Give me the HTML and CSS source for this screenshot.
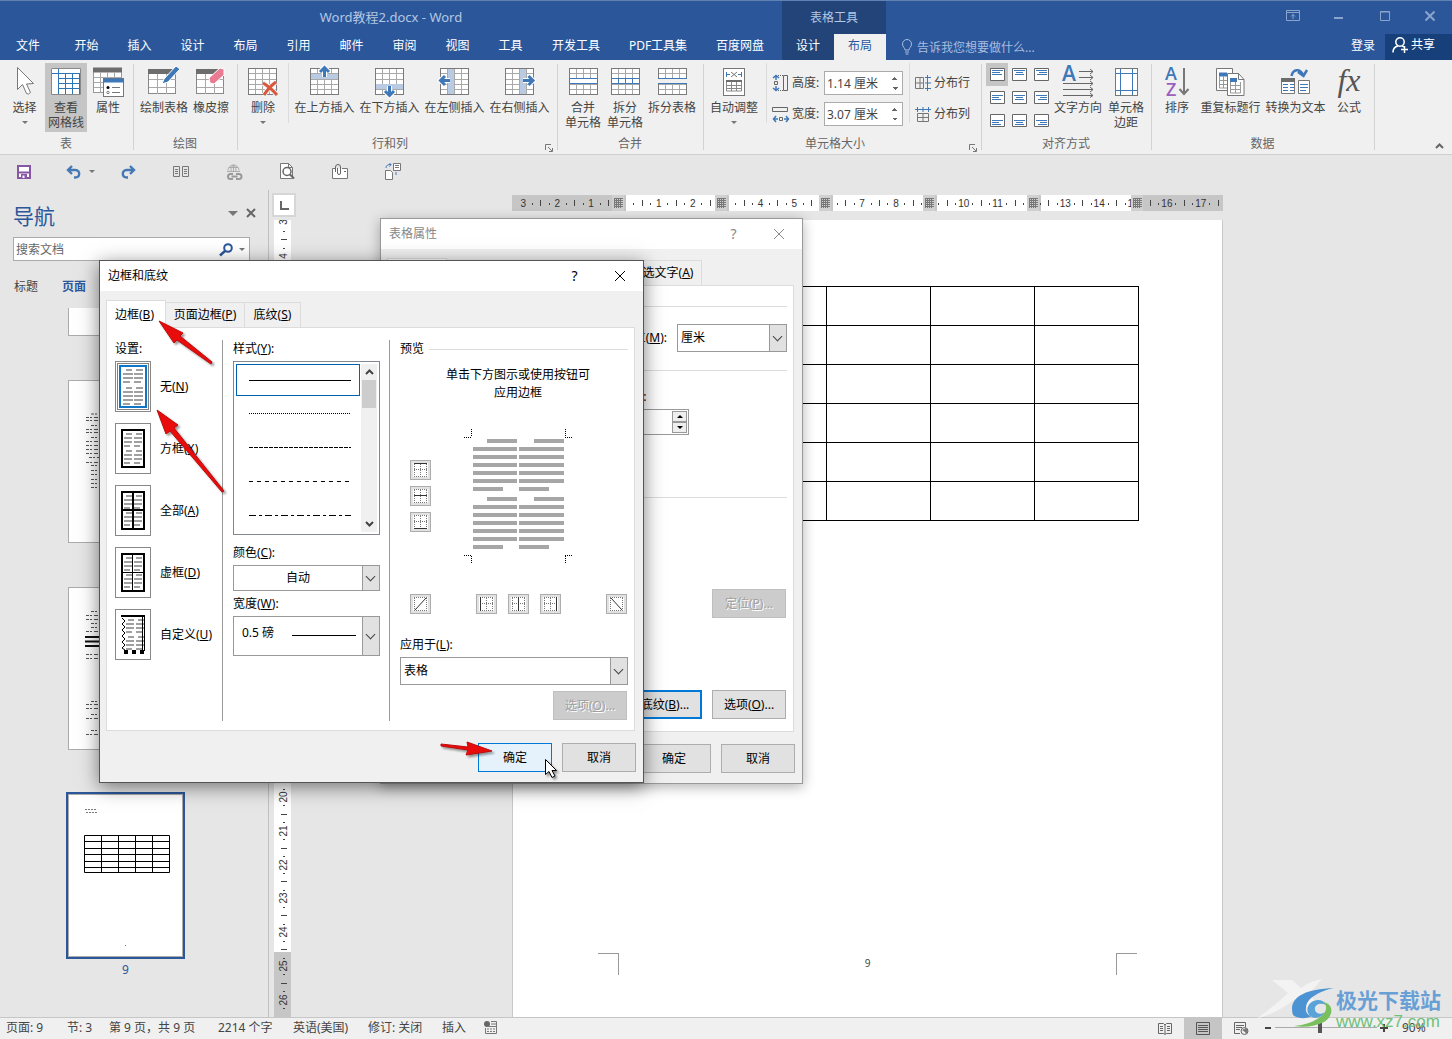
FILE: index.html
```html
<!DOCTYPE html>
<html lang="zh-CN">
<head>
<meta charset="utf-8">
<title>Word教程2.docx - Word</title>
<link rel="stylesheet" href="styles.css">
</head>
<body>
<svg class="sprite" aria-hidden="true">
  <symbol id="grid" viewBox="0 0 29 27">
    <rect x=".5" y=".5" width="28" height="26" fill="#fff" stroke="#7a7a7a"/>
    <path d="M7.500 1v25M14.500 1v25M21.500 1v25M1 5.500h27M1 11.500h27M1 16.500h27M1 21.500h27" stroke="#a9a9a9" fill="none"/>
  </symbol>
  <symbol id="lines" viewBox="0 0 34 49">
    <path d="M10 10h6M20 10h6M8 14h8M18 14h8M8 18h8M18 18h8M8 22h6M18 22h6M10 27h6M20 27h6M8 31h8M18 31h8M8 35h8M18 35h8M8 39h6M18 39h6" stroke="#a0a0a0" stroke-width="2" fill="none"/>
  </symbol>
  <symbol id="dots" viewBox="0 0 15 14">
    <rect width="15" height="14" fill="#fff"/>
    <path d="M1 .5h13M1 6.500h13M1 13.500h13M1.500 1v13M7.500 1v13M13.500 1v13" stroke="#777" stroke-dasharray="1 1" fill="none"/>
  </symbol>
  <symbol id="dots-frame" viewBox="0 0 15 14">
    <rect width="15" height="14" fill="#fff"/>
    <path d="M1 .5h13M1 13.500h13M1.500 1v13M13.500 1v13" stroke="#777" stroke-dasharray="1 1" fill="none"/>
  </symbol>
  <symbol id="launch" viewBox="0 0 9 9"><path d="M.5 6V.5H6M3 3l4 4M7.500 4v3.500H4" stroke="#777" fill="none"/></symbol>
  <symbol id="close" viewBox="0 0 12 12"><path d="M1 1l10 10M11 1L1 11" stroke="currentColor" fill="none"/></symbol>
</svg>

<header class="titlebar">
  <div class="title-left">
    <div class="doc-title">Word教程2.docx - Word</div>
    <nav class="tabs">
      <button class="tab file">文件</button>
      <button class="tab">开始</button>
      <button class="tab">插入</button>
      <button class="tab">设计</button>
      <button class="tab">布局</button>
      <button class="tab">引用</button>
      <button class="tab">邮件</button>
      <button class="tab">审阅</button>
      <button class="tab">视图</button>
      <button class="tab">工具</button>
      <button class="tab wide">开发工具</button>
      <button class="tab wider">PDF工具集</button>
      <button class="tab wide">百度网盘</button>
    </nav>
  </div>
  <div class="context">
    <div class="context-title">表格工具</div>
    <div class="context-tabs">
      <button class="tab">设计</button>
      <button class="tab active">布局</button>
    </div>
  </div>
  <div class="title-right">
    <div class="window-buttons">
      <button aria-label="功能区显示选项"><svg width="14" height="12"><path d="M.5 .5h13v10h-13zM.5 2.500h13M7 9V4M5 6.500l2-2 2 2" stroke="#8ba4cd" fill="none"/></svg></button>
      <button aria-label="最小化"><svg width="12" height="12"><path d="M1 8h9" stroke="#8ba4cd" stroke-width="2"/></svg></button>
      <button aria-label="最大化"><svg width="12" height="12"><path d="M1.500 1.500h9v9h-9zM1 2h10" stroke="#8ba4cd" fill="none"/></svg></button>
      <button aria-label="关闭"><svg width="12" height="12"><path d="M1.500 1.500l9 9M10.500 1.500l-9 9" stroke="#8ba4cd" stroke-width="2"/></svg></button>
    </div>
    <div class="tell-row">
      <svg width="12" height="16" class="bulb"><path d="M4 11c0-2-2.500-3-2.500-6a4.500 4.500 0 0 1 9 0c0 3-2.500 4-2.500 6zM4 13h4M4.500 15h3" stroke="#a8bde0" fill="none"/></svg>
      <input class="tell" aria-label="操作说明搜索" placeholder="告诉我您想要做什么...">
      <button class="login">登录</button>
      <button class="share"><svg width="16" height="16"><circle cx="8" cy="5" r="4.200" fill="none" stroke="#fff" stroke-width="1.500"/><path d="M1 15.500c0-4 2.500-6 5-6.500M10 9c1 .3 2 1 2 1M9 12.500h7M12.500 9v7" stroke="#fff" stroke-width="1.500" fill="none"/></svg>共享</button>
    </div>
  </div>
</header>

<section class="ribbon">
  <div class="group g-table">
    <div class="items">
      <button class="big w40"><svg width="30" height="30"><path d="M7.500 .5v22l5-5 4 9q2 1.500 4-1l-4-8.500 7-.5z" fill="#fff" stroke="#777"/></svg><span>选择</span><i class="caret"></i></button>
      <button class="big w42 pressed"><svg width="30" height="30"><path d="M.5 1.500h29v26h-29z" fill="#fff"/><path d="M1 1.500h28.500v26H.5v-26" fill="none" stroke="#888"/><path d="M7.500 2v25M1 6.500h28M8 11.500h21M8 16.500h21M8 21.500h21M14.500 6v21M21.500 6v21M28.500 6v21" stroke="#2e75b6" fill="none"/></svg><span>查看</span><span>网格线</span></button>
      <button class="big w42"><svg width="31" height="30"><rect x=".5" y="1.500" width="28" height="24" fill="#fff" stroke="#999"/><path d="M0 3h29" stroke="#6d6d6d" stroke-width="5"/><path d="M1 10.500h27M1 15.500h27M1 20.500h27M7.500 5v20M14.500 5v20M21.500 5v20" stroke="#a9a9a9"/><rect x="10.500" y="11.500" width="20" height="18" fill="#fff" stroke="#777"/><path d="M10 13.500h21" stroke="#3f78b8" stroke-width="4"/><path d="M19 20.500h8M19 25.500h8" stroke="#777"/><circle cx="15" cy="20.500" r="1.500"/><circle cx="15" cy="25.500" r="1.200" fill="none" stroke="#777"/></svg><span>属性</span></button>
    </div>
    <div class="foot"><span>表</span></div>
  </div>
  <div class="group g-draw">
    <div class="items">
      <button class="big w54"><svg width="33" height="30"><rect x=".5" y="2.500" width="27" height="24" fill="#fff" stroke="#888"/><path d="M0 4.500h28" stroke="#6d6d6d" stroke-width="5"/><path d="M9.500 7v20M18.500 7v20M1 12.500h27M1 20.500h27" stroke="#a9a9a9"/><path d="M14 17l2-5L28-1l4 3-12 13z" fill="#3f78b8" stroke="#fff"/></svg><span>绘制表格</span></button>
      <button class="big w42"><svg width="30" height="30"><rect x=".5" y="2.500" width="27" height="24" fill="#fff" stroke="#888"/><path d="M0 4.500h28" stroke="#6d6d6d" stroke-width="5"/><path d="M9.500 7v20M18.500 7v20M1 12.500h27M1 20.500h27" stroke="#a9a9a9"/><path d="M13 11L24 1l4 1v6L18 17l-4-1z" fill="#ea7b92" stroke="#fff"/></svg><span>橡皮擦</span></button>
    </div>
    <div class="foot"><span>绘图</span></div>
  </div>
  <div class="group g-rows">
    <div class="items">
      <button class="big w50"><svg width="31" height="30"><use href="#grid" y="1" width="29" height="27"/><path d="M15 16q7 4 14 12M28 15Q21 20 16 28" stroke="#f0f0f0" stroke-width="5" fill="none"/><path d="M15 16q7 4 14 12M28 15Q21 20 16 28" stroke="#d9583b" stroke-width="3" fill="none"/></svg><span>删除</span><i class="caret"></i></button>
      <i class="sep"></i>
      <button class="big w65"><svg width="29" height="30"><use href="#grid" y="1" width="29" height="27"/><path d="M1 7h27v5H1z" fill="#b9cbe2"/><path d="M14.500 10V2M10 5l4.500-4.500L19 5" stroke="#fff" stroke-width="5" fill="none"/><path d="M14.500 10V2M10 5l4.500-4.500L19 5" stroke="#3f78b8" stroke-width="3" fill="none"/></svg><span>在上方插入</span></button>
      <button class="big w65"><svg width="29" height="30"><use href="#grid" y="1" width="29" height="27"/><path d="M1 17h27v5H1z" fill="#b9cbe2"/><path d="M14.500 19v9M10 24l4.500 4.500L19 24" stroke="#fff" stroke-width="5" fill="none"/><path d="M14.500 19v9M10 24l4.500 4.500L19 24" stroke="#3f78b8" stroke-width="3" fill="none"/></svg><span>在下方插入</span></button>
      <button class="big w65"><svg width="31" height="30"><use href="#grid" x="1" y="1" width="29" height="27"/><path d="M9 2h6v25H9z" fill="#b9cbe2"/><path d="M11 13.500H2M6 9l-4.500 4.500L6 18" stroke="#fff" stroke-width="5" fill="none"/><path d="M11 13.500H2M6 9l-4.500 4.500L6 18" stroke="#3f78b8" stroke-width="3" fill="none"/></svg><span>在左侧插入</span></button>
      <button class="big w65"><svg width="31" height="30"><use href="#grid" x="1" y="1" width="29" height="27"/><path d="M16 2h6v25h-6z" fill="#b9cbe2"/><path d="M19 13.500h9M24.500 9l4.500 4.500-4.500 4.500" stroke="#fff" stroke-width="5" fill="none"/><path d="M19 13.500h9M24.500 9l4.500 4.500-4.500 4.500" stroke="#3f78b8" stroke-width="3" fill="none"/></svg><span>在右侧插入</span></button>
    </div>
    <div class="foot has-launch"><span>行和列</span><button class="launch" aria-label="表格属性"><svg width="9" height="9"><use href="#launch"/></svg></button></div>
  </div>
  <div class="group g-merge">
    <div class="items">
      <button class="big w42"><svg width="29" height="30"><use href="#grid" y="1" width="29" height="27"/><path d="M.5 11.500h28v5H.5z" fill="#fff" stroke="#3f78b8"/></svg><span>合并</span><span>单元格</span></button>
      <button class="big w42"><svg width="29" height="30"><use href="#grid" y="1" width="29" height="27"/><path d="M.5 11.500h28v5H.5zM7.500 11v6M14.500 11v6M21.500 11v6" fill="#fff" stroke="#3f78b8"/></svg><span>拆分</span><span>单元格</span></button>
      <button class="big w54"><svg width="29" height="30"><use href="#grid" y="1" width="29" height="27"/><path d="M0 12h29v4H0z" fill="#f0f0f0"/><path d="M0 11.500h29M0 16.500h29" stroke="#3f78b8"/></svg><span>拆分表格</span></button>
    </div>
    <div class="foot"><span>合并</span></div>
  </div>
  <div class="group g-size">
    <div class="items">
      <button class="big w60"><svg width="22" height="30"><rect x=".5" y="1.500" width="21" height="27" fill="#fff" stroke="#777"/><path d="M3 14h16" stroke="#6d6d6d" stroke-width="2"/><path d="M3.500 15v9h15v-9M3 18.500h16M3 21.500h16M8.500 15v9M13.500 15v9" stroke="#888" fill="none"/><path d="M3.500 5v5M18.500 5v5M4 7.500h3M15 7.500h3" stroke="#3f78b8"/><path d="M8 5l6 5M14 5l-6 5" stroke="#777"/></svg><span>自动调整</span><i class="caret"></i></button>
      <i class="sep"></i>
      <div class="dims">
        <div class="dim"><svg width="17" height="18"><path d="M6 1.500h5M6 16.500h5" stroke="#666" stroke-dasharray="1 1"/><path d="M11.500 1.500h4v15h-4zM2.500 7.500h3v3h-3z" stroke="#666" fill="none"/><path d="M4 1v5M4 12v5M1 4l3-2.500L7 4M1 14l3 2.500L7 14" stroke="#3f78b8" stroke-width="1.500" fill="none"/></svg><label for="cell-h">高度:</label><div class="spin"><input id="cell-h" value="1.14 厘米"><i class="updown"></i></div></div>
        <div class="dim"><svg width="17" height="18"><path d="M.5 2.500h15v4H.5zM7.500 12.500h3v3h-3z" stroke="#666" fill="none"/><path d="M1 14h5M12 14h5M4 11l-2.500 3L4 17M14 11l2.500 3-2.500 3" stroke="#3f78b8" stroke-width="1.500" fill="none"/></svg><label for="cell-w">宽度:</label><div class="spin"><input id="cell-w" value="3.07 厘米"><i class="updown"></i></div></div>
      </div>
      <i class="sep"></i>
      <div class="dist">
        <button><svg width="16" height="16"><path d="M.5 2.500h8v11h-8zM.5 8h8M5 2.500v11" stroke="#777" fill="none"/><path d="M12.500 0v16M10 2.500h6M10 8h6M10 13.500h6" stroke="#3f78b8"/></svg>分布行</button>
        <button><svg width="16" height="16"><path d="M2.500 7.500h11v8h-11zM2.500 11.500h11M8 7.500v8" stroke="#777" fill="none"/><path d="M0 3.500h16M2.500 1v5M8 1v5M13.500 1v5" stroke="#3f78b8"/></svg>分布列</button>
      </div>
    </div>
    <div class="foot has-launch"><span>单元格大小</span><button class="launch" aria-label="单元格大小设置"><svg width="9" height="9"><use href="#launch"/></svg></button></div>
  </div>
  <div class="group g-align">
    <div class="items">
      <div class="align-grid">
        <button class="pressed" aria-label="靠上左对齐"><svg width="15" height="13"><path d="M.5 .5h14v12H.5z" fill="#fff" stroke="#666"/><path d="M2 2.500h11M2 4.500h8M2 6.500h10" stroke="#3f78b8"/></svg></button>
        <button aria-label="靠上居中"><svg width="15" height="13"><path d="M.5 .5h14v12H.5z" fill="#fff" stroke="#666"/><path d="M2 2.500h11M4 4.500h7M3 6.500h9" stroke="#3f78b8"/></svg></button>
        <button aria-label="靠上右对齐"><svg width="15" height="13"><path d="M.5 .5h14v12H.5z" fill="#fff" stroke="#666"/><path d="M2 2.500h11M5 4.500h8M3 6.500h10" stroke="#3f78b8"/></svg></button>
        <button aria-label="中部左对齐"><svg width="15" height="13"><path d="M.5 .5h14v12H.5z" fill="#fff" stroke="#666"/><path d="M2 4.500h11M2 6.500h7M2 8.500h9" stroke="#3f78b8"/></svg></button>
        <button aria-label="水平居中"><svg width="15" height="13"><path d="M.5 .5h14v12H.5z" fill="#fff" stroke="#666"/><path d="M2 4.500h11M4 6.500h7M3 8.500h9" stroke="#3f78b8"/></svg></button>
        <button aria-label="中部右对齐"><svg width="15" height="13"><path d="M.5 .5h14v12H.5z" fill="#fff" stroke="#666"/><path d="M2 4.500h11M6 6.500h7M4 8.500h9" stroke="#3f78b8"/></svg></button>
        <button aria-label="靠下左对齐"><svg width="15" height="13"><path d="M.5 .5h14v12H.5z" fill="#fff" stroke="#666"/><path d="M2 6.500h11M2 8.500h7M2 10.500h9" stroke="#3f78b8"/></svg></button>
        <button aria-label="靠下居中"><svg width="15" height="13"><path d="M.5 .5h14v12H.5z" fill="#fff" stroke="#666"/><path d="M2 6.500h11M4 8.500h7M3 10.500h9" stroke="#3f78b8"/></svg></button>
        <button aria-label="靠下右对齐"><svg width="15" height="13"><path d="M.5 .5h14v12H.5z" fill="#fff" stroke="#666"/><path d="M2 6.500h11M6 8.500h7M4 10.500h9" stroke="#3f78b8"/></svg></button>
      </div>
      <button class="big w50"><svg width="32" height="30"><text class="letter" x="0" y="14" font-size="21" fill="#3f78b8">A</text><path d="M17 4.500h14M17 10.500h14M1 16.500h30M1 22.500h30M1 28.500h30M28 2l3 2.500L28 7M28 8l3 2.500-3 2.500M28 14l3 2.500-3 2.500M28 20l3 2.500-3 2.500M28 26l3 2.500-3 2" stroke="#666" fill="none"/></svg><span>文字方向</span></button>
      <button class="big w46"><svg width="23" height="30"><rect x=".5" y="1.500" width="22" height="27" fill="#fff" stroke="#777"/><path d="M5.500 2v26M17.500 2v26M1 6.500h21M1 23.500h21" stroke="#3f78b8"/></svg><span>单元格</span><span>边距</span></button>
    </div>
    <div class="foot"><span>对齐方式</span></div>
  </div>
  <div class="group g-data">
    <div class="items">
      <button class="big w42"><svg width="26" height="30"><text class="letter" x="1" y="13" font-size="18" fill="#3f78b8">A</text><text class="letter" x="2" y="29" font-size="18" fill="#9b5fc0">Z</text><path d="M20 1v26M15.500 22l4.500 5 4.500-5" stroke="#777" stroke-width="2" fill="none"/></svg><span>排序</span></button>
      <button class="big w65"><svg width="29" height="30"><path d="M.5 1.500h16v22H.5z" fill="#fff" stroke="#777"/><path d="M3 7.500h8" stroke="#3f78b8" stroke-width="4"/><path d="M3.500 9v12h8M3 13.500h9M3 17.500h9M7.500 9v12" stroke="#999" fill="none"/><path d="M11.500 6.500h11l5.500 6v16H11.500z" fill="#fff" stroke="#777"/><path d="M22.500 6.500v6H28" stroke="#777" fill="none"/><path d="M14 13h7" stroke="#3f78b8" stroke-width="4"/><path d="M14.500 15v11h10V15M14 18.500h11M14 22.500h11M19.500 15v11" stroke="#999" fill="none"/></svg><span>重复标题行</span></button>
      <button class="big w65"><svg width="29" height="30"><path d="M.5 11.500h13v15H.5zM17.500 13.500h11v13h-11z" fill="#fff" stroke="#777"/><path d="M0 13h14" stroke="#6d6d6d" stroke-width="4"/><path d="M2 17.500h5M2 20.500h5M2 23.500h5M9 17.500h4M9 20.500h4M9 23.500h4M19 17.500h8M19 20.500h8M19 23.500h6" stroke="#3f78b8"/><path d="M10.500 9C12 2 19 1 22 8M17 5l5.500 4L26 3" stroke="#3f78b8" stroke-width="2.500" fill="none"/></svg><span>转换为文本</span></button>
      <button class="big w42"><em class="fx">fx</em><span>公式</span></button>
    </div>
    <div class="foot"><span>数据</span></div>
  </div>
  <button class="collapse" aria-label="折叠功能区"><svg width="9" height="6"><path d="M1 5l3.500-3.500L8 5" stroke="#666" stroke-width="2" fill="none"/></svg></button>
</section>

<section class="quick">
  <button class="save" aria-label="保存"><svg width="14" height="14"><path d="M1 1h12v12H1zM1 7.500h12" stroke="#8757a5" stroke-width="2" fill="#fff"/><path d="M4 9h6v4H4z" fill="#8757a5"/><path d="M5.500 10.500h2V13h-2z" fill="#fff"/></svg></button>
  <button aria-label="撤消"><svg width="16" height="14"><path d="M2 5h7.500c5 0 5 7.500-.5 7.500H8M6 1L2 5l4 4" stroke="#4478b4" stroke-width="2.400" fill="none"/></svg></button>
  <button class="more" aria-label="撤消列表"><i class="caret"></i></button>
  <button aria-label="恢复"><svg width="16" height="14"><path d="M14 5H6.500c-5 0-5 7.500.5 7.500H8M10 1l4 4-4 4" stroke="#4478b4" stroke-width="2.400" fill="none"/></svg></button>
  <button aria-label="并排"><svg width="16" height="12"><path d="M.5 .5h6v10h-6zM9.500 .5h6v10h-6zM2 3.500h3M2 5.500h3M2 7.500h3M11 3.500h3M11 5.500h3M11 7.500h3" stroke="#777" fill="none"/></svg></button>
  <button aria-label="链接"><svg width="16" height="18"><path d="M2 7.500a5.500 5.500 0 0 1 11 0M1 8.500h13M3 4.500h9M7.500 2v7M5 8c0-4 1-5 2.500-6C9 3 10 4 10 8" stroke="#aaa" fill="none"/><path d="M7 11H4.500a2.500 2.500 0 0 0 0 5H7M10 11h3a2.500 2.500 0 0 1 0 5h-3M5.500 13.500h6" stroke="#999" stroke-width="2" fill="none"/></svg></button>
  <button aria-label="打印预览"><svg width="14" height="17"><path d="M.5 .5h8l4 4v11H.5z" fill="#fff" stroke="#777"/><path d="M8.500 .5v4h4" stroke="#777" fill="none"/><circle cx="7" cy="8.500" r="4" fill="#fff" stroke="#666" stroke-width="1.500"/><path d="M10 11.500l4 4" stroke="#666" stroke-width="2"/></svg></button>
  <button aria-label="附件"><svg width="16" height="16"><path d="M3 4.500H.5v10h15v-10H10" fill="#fff" stroke="#777"/><path d="M12 7.500h2M3.500 8V3a2.500 2.500 0 0 1 5 0v6a1.500 1.500 0 0 1-3 0V4" stroke="#666" fill="none"/></svg></button>
  <button aria-label="比较文档"><svg width="16" height="17"><path d="M.5 7.500h5l2 2v7h-7zM8.500 .5h7v7h-7zM10 2.500h4M10 4.500h4" fill="#fff" stroke="#777"/><path d="M1 5c0-3 2-3.500 5-3.500M4.500 0L6 1.500 4.500 3.500M11 9v3" stroke="#3f78b8" fill="none"/></svg></button>
</section>

<main class="workspace">
  <aside class="nav">
    <div class="nav-head"><h2>导航</h2><button aria-label="任务窗格选项"><i class="caret big-caret"></i></button><button aria-label="关闭导航"><svg width="10" height="10"><path d="M1 1l8 8M9 1L1 9" stroke="#666" stroke-width="2"/></svg></button></div>
    <div class="search"><input aria-label="搜索文档" placeholder="搜索文档"><svg width="14" height="13"><circle cx="9" cy="5" r="3.800" fill="none" stroke="#2b579a" stroke-width="2"/><path d="M6 8l-5 4.500" stroke="#2b579a" stroke-width="2.500"/></svg><i class="caret"></i></div>
    <div class="nav-tabs"><button>标题</button><button class="on">页面</button></div>
    <div class="thumbs">
      <div class="thumb cut"><span class="sheet"></span><span class="no"></span></div>
      <div class="thumb"><span class="sheet"><svg width="115" height="161"><path d="M22 33h77M17 36.500h81M17 39.500h81M22 44.500h77M17 48.500h81M17 51.500h81M22 56.500h77M17 60.500h81M17 64.500h81M17 68.500h60M17 72.500h81M20 76.500h70M17 81.500h81M22 84.500h60M22 89.500h77M22 93.500h77M22 98.500h60M22 102.500h60M22 106.500h60" stroke="#555" stroke-dasharray="3 1 2 2 4 1"/></svg></span><span class="no"></span></div>
      <div class="thumb"><span class="sheet"><svg width="115" height="161"><path d="M22 23.500h77M17 27.500h81M17 31.500h81M22 35.500h77M22 39.500h77M17 43.500h81M17 66.500h81M17 70.500h81M22 113.500h77M17 116.500h81M17 120.500h81M22 126.500h77M17 130.500h81M22 142.500h77M17 146.500h81" stroke="#555" stroke-dasharray="3 1 2 2 4 1"/><path d="M16 49h82M16 53.500h82M16 58h82" stroke="#111" stroke-width="2"/></svg></span><span class="no"></span></div>
      <div class="thumb current"><span class="sheet"><svg width="115" height="161"><path d="M16 14.500h12M17 17.500h12" stroke="#777" stroke-dasharray="2 1"/><path d="M15.500 40.500h85v37h-85zM15 46.500h86M15 53.500h86M15 59.500h86M15 66.500h86M15 72.500h86M32.500 40v38M49.500 40v38M66.500 40v38M83.500 40v38" stroke="#000" fill="none"/><path d="M56 150.500h1" stroke="#777"/></svg></span><span class="no">9</span></div>
    </div>
  </aside>
  <div class="vruler-col">
    <button class="corner" aria-label="制表符"><svg width="9" height="9"><path d="M1 0v8h8" stroke="#666" stroke-width="2" fill="none"/></svg></button>
    <div class="vruler"><svg id="vruler" width="17" height="1600"></svg></div>
  </div>
  <div class="canvas">
    <div class="hruler"><svg id="hruler" width="711" height="16"></svg></div>
    <article class="page">
      <table class="doc-table" aria-label="文档表格">
        <tr><td></td><td></td><td></td><td></td><td></td></tr>
        <tr><td></td><td></td><td></td><td></td><td></td></tr>
        <tr><td></td><td></td><td></td><td></td><td></td></tr>
        <tr><td></td><td></td><td></td><td></td><td></td></tr>
        <tr><td></td><td></td><td></td><td></td><td></td></tr>
        <tr><td></td><td></td><td></td><td></td><td></td></tr>
      </table>
      <div class="page-foot"><i class="mark left"></i><span>9</span><i class="mark right"></i></div>
    </article>
  </div>
</main>

<footer class="status">
  <span class="s1">页面: 9</span><span class="s2">节: 3</span><span class="s3">第 9 页，共 9 页</span><span class="s4">2214 个字</span><span class="s5">英语(美国)</span><span class="s6">修订: 关闭</span><span class="s7">插入</span>
  <svg width="13" height="13"><circle cx="3" cy="3" r="3" fill="#666"/><path d="M7 .5h5.500v12h-11V7M2 5.500h10M7 3h5" stroke="#777" fill="none"/><path d="M3 8h9M3 10.500h9" stroke="#777" stroke-dasharray="2 1"/></svg>
  <div class="views">
    <button aria-label="阅读视图"><svg width="14" height="13"><path d="M.5 1.500h5L7 3l1.500-1.500h5v10h-5L7 12.500 5.500 11.500h-5zM7 3v9M2 4.500h3M2 6.500h3M2 8.500h3M9 4.500h3M9 6.500h3M9 8.500h3" stroke="#666" fill="none"/></svg></button>
    <button class="pressed" aria-label="页面视图"><svg width="14" height="13"><path d="M.5 .5h13v12H.5zM2 3.500h10M2 5.500h10M2 7.500h10M2 9.500h10" stroke="#555" fill="none"/></svg></button>
    <button aria-label="Web 版式视图"><svg width="15" height="13"><path d="M6 11.500H.5V.5h11V5M2 3.500h8M2 5.500h6M2 7.500h4" stroke="#666" fill="none"/><circle cx="10.500" cy="9" r="3.500" fill="#eee" stroke="#666"/><path d="M8 8l3 2 1 2 2-3-2-3z" fill="#777"/></svg></button>
  </div>
  <div class="zoom"><button aria-label="缩小"><svg width="8" height="8"><path d="M1 4h6" stroke="#444" stroke-width="2"/></svg></button><input type="range" min="0" max="100" value="44" aria-label="缩放"><button aria-label="放大"><svg width="8" height="8"><path d="M0 4h8M4 0v8" stroke="#444" stroke-width="2"/></svg></button><span>90%</span></div>
</footer>

<section class="dialog props" role="dialog" aria-label="表格属性">
  <div class="dlg-title"><span>表格属性</span><button aria-label="帮助">?</button><button aria-label="关闭"><svg width="12" height="12"><use href="#close"/></svg></button></div>
  <div class="dlg-tabs">
    <button class="dtab on">表格(<u>T</u>)</button><button class="dtab grow">行(<u>R</u>)</button><button class="dtab grow">列(<u>U</u>)</button><button class="dtab grow">单元格(<u>E</u>)</button><button class="dtab alt">可选文字(<u>A</u>)</button>
  </div>
  <div class="panel">
    <div class="legend">尺寸</div>
    <div class="prow unit"><label for="unit">度量单位(<u>M</u>):</label><div class="combo"><select id="unit"><option>厘米</option></select></div></div>
    <div class="legend">对齐方式</div>
    <div class="indent"><label for="indent">左缩进(<u>I</u>):</label><div class="spinbox"><input id="indent" value="0 厘米"><span class="steps"><button aria-label="增加"><i class="up"></i></button><button aria-label="减少"><i class="caret"></i></button></span></div></div>
    <div class="legend wrap">文字环绕</div>
    <div class="prow place"><button class="btn" disabled>定位(<u>P</u>)...</button></div>
    <div class="prow pair"><button class="btn focus">边框和底纹(<u>B</u>)...</button><button class="btn">选项(<u>O</u>)...</button></div>
  </div>
  <div class="dlg-foot"><button class="btn">确定</button><button class="btn">取消</button></div>
</section>

<section class="dialog borders" role="dialog" aria-label="边框和底纹">
  <div class="dlg-title"><span>边框和底纹</span><button aria-label="帮助">?</button><button aria-label="关闭"><svg width="12" height="12"><use href="#close"/></svg></button></div>
  <div class="dlg-tabs">
    <button class="dtab on">边框(<u>B</u>)</button><button class="dtab t-page">页面边框(<u>P</u>)</button><button class="dtab t-shade">底纹(<u>S</u>)</button>
  </div>
  <div class="panel cols">
    <div class="col settings">
      <div class="cap">设置:</div>
      <button class="set"><svg width="34" height="49"><rect x="1.500" y="1.500" width="31" height="46" fill="none" stroke="#000" stroke-dasharray="1 1"/><rect x="4" y="4" width="26" height="41" fill="#fff" stroke="#1076c8" stroke-width="2"/><path d="M10 8h6M20 8h7M7 12h10M18 12h9M7 16h10M18 16h9M7 20h7M18 20h7M10 26h6M20 26h7M7 30h10M18 30h9M7 34h10M18 34h9M7 38h10M18 38h9M7 42h7M18 42h7" stroke="#a0a0a0" stroke-width="2" fill="none"/></svg><span>无(<u>N</u>)</span></button>
      <button class="set"><svg width="34" height="49"><use href="#lines"/><rect x="6" y="6" width="22" height="37" fill="none" stroke="#000" stroke-width="2"/></svg><span>方框(<u>X</u>)</span></button>
      <button class="set"><svg width="34" height="49"><use href="#lines"/><path d="M6 6h22v37H6zM17 6v37M6 24h22" fill="none" stroke="#000" stroke-width="2"/></svg><span>全部(<u>A</u>)</span></button>
      <button class="set"><svg width="34" height="49"><use href="#lines"/><rect x="6" y="6" width="22" height="37" fill="none" stroke="#000" stroke-width="2"/><path d="M16.500 6v37M6 24.500h22" stroke="#000"/></svg><span>虚框(<u>D</u>)</span></button>
      <button class="set"><svg width="34" height="49"><use href="#lines" x="2" width="34" height="49"/><path d="M5 6h24" stroke="#000" stroke-width="2"/><path d="M6 8l3 3-3 3 3 3-3 3 3 3-3 3 3 3-3 3 3 3-3 3 3 2" fill="none" stroke="#000"/><path d="M26.500 7v34M28.500 7v34" stroke="#000"/><path d="M8 42h20" stroke="#000" stroke-width="4" stroke-dasharray="4 4"/></svg><span>自定义(<u>U</u>)</span></button>
    </div>
    <div class="col style">
      <div class="cap">样式(<u>Y</u>):</div>
      <div class="listbox">
        <div class="lines" role="listbox" aria-label="样式">
          <button class="ln sel" role="option" aria-label="实线"><svg width="102" height="1"><path d="M0 .5h102" stroke="#000"/></svg></button>
          <button class="ln" role="option" aria-label="点线"><svg width="102" height="1"><path d="M0 .5h102" stroke="#000" stroke-dasharray="1 1"/></svg></button>
          <button class="ln" role="option" aria-label="短划线"><svg width="102" height="1"><path d="M0 .5h102" stroke="#000" stroke-dasharray="4 1"/></svg></button>
          <button class="ln" role="option" aria-label="长划线"><svg width="102" height="1"><path d="M0 .5h102" stroke="#000" stroke-dasharray="4 4"/></svg></button>
          <button class="ln" role="option" aria-label="点划线"><svg width="102" height="1"><path d="M0 .5h102" stroke="#000" stroke-dasharray="7 3 3 3"/></svg></button>
        </div>
        <div class="scroll"><svg width="9" height="6"><path d="M1 5l3.500-3.500L8 5" stroke="#444" stroke-width="2" fill="none"/></svg><i class="grip"></i><svg width="9" height="6"><path d="M1 1l3.500 3.500L8 1" stroke="#444" stroke-width="2" fill="none"/></svg></div>
      </div>
      <label for="color">颜色(<u>C</u>):</label>
      <div class="combo color"><select id="color"><option>自动</option></select></div>
      <label for="width">宽度(<u>W</u>):</label>
      <div class="combo width"><select id="width"><option>0.5 磅</option></select></div>
    </div>
    <div class="col preview">
      <div class="legend">预览</div>
      <p>单击下方图示或使用按钮可<br>应用边框</p>
      <div class="stage">
        <div class="side">
          <button aria-label="上边框"><svg width="15" height="14"><use href="#dots"/><path d="M1 .5h13" stroke="#333"/></svg></button>
          <button aria-label="内部横框线"><svg width="15" height="14"><use href="#dots"/><path d="M1 6.500h13" stroke="#333"/></svg></button>
          <button aria-label="下边框"><svg width="15" height="14"><use href="#dots"/><path d="M1 13.500h13" stroke="#333"/></svg></button>
        </div>
        <svg width="110" height="136">
          <path d="M23 12h30M70 12h30M9 20h44M55 20h45M9 28h44M55 28h45M9 36h44M55 36h45M9 44h44M55 44h45M9 52h44M55 52h45M9 60h30M55 60h30M23 70h30M70 70h30M9 78h44M55 78h45M9 86h44M55 86h45M9 94h44M55 94h45M9 102h44M55 102h45M9 110h44M55 110h45M9 118h30M55 118h30" stroke="#a6a6a6" stroke-width="4"/>
          <path d="M0 8.500h8M7.500 0v8M101.500 0v8M101 8.500h8M0 126.500h8M7.500 127v8M101 126.500h8M101.500 127v8" stroke="#000" stroke-dasharray="1 1"/>
        </svg>
      </div>
      <div class="bottom">
        <button aria-label="斜上框线"><svg width="15" height="14"><use href="#dots-frame"/><path d="M2 13L13 1" stroke="#333"/></svg></button>
        <span class="mid">
          <button aria-label="左框线"><svg width="15" height="14"><use href="#dots"/><path d="M1.500 0v14" stroke="#333"/></svg></button>
          <button aria-label="内部竖框线"><svg width="15" height="14"><use href="#dots"/><path d="M7.500 0v14" stroke="#333"/></svg></button>
          <button aria-label="右框线"><svg width="15" height="14"><use href="#dots"/><path d="M13.500 0v14" stroke="#333"/></svg></button>
        </span>
        <button aria-label="斜下框线"><svg width="15" height="14"><use href="#dots-frame"/><path d="M2 1l11 12" stroke="#333"/></svg></button>
      </div>
      <label for="apply">应用于(<u>L</u>):</label>
      <div class="combo"><select id="apply"><option>表格</option></select></div>
      <button class="btn opt" disabled>选项(<u>O</u>)...</button>
    </div>
  </div>
  <div class="dlg-foot"><button class="btn hot">确定</button><button class="btn">取消</button></div>
</section>

<svg class="arrows" width="560" height="790" aria-hidden="true">
  <g fill="#e80c0c" stroke="#c00a0a" stroke-linejoin="round">
    <path d="M159 321l24 12-3 3 32 26-1 2-34-24-3 3z"/>
    <path d="M157 410l21 15-4 3 50 63-2 1-52-61-4 3z"/>
    <path d="M492 751l-26 4 2-5-27-4v-2l27 3-1-5z"/>
  </g>
  <path d="M545.500 759.500v15l3.500-3 3 6 3-1.500-3-5.500h4.500z" fill="#fff" stroke="#000"/>
</svg>

<div class="brand">
  <svg width="190" height="52" aria-hidden="true">
    <path d="M0 40Q22 24 32 14L16 1h20l9 8Q54 2 66 0L54 14l8 14H44l-5-8Q22 34 0 40z" fill="#fff" opacity=".5"/>
    <path d="M37 36C32 20 46 10 78 9 64 12 50 19 50 29 49 33 52 37 56 37 50 40 42 40 37 36z" fill="#4c93d3"/>
    <path d="M52 34c-4-12 14-18 18-8-6-3-12 0-11 5 1 4 6 5 10 2-4 7-14 8-17 1z" fill="#5aa3d9"/>
    <path d="M38 47c12-1 24-5 31-14 2-4 1-8-2-10 12 2 10 15 1 20-8 4-19 6-30 4z" fill="#79bf5d"/>
  </svg>
  <strong>极光下载站</strong>
  <span>www.xz7.com</span>
</div>
<script src="rulers.js"></script>
</body>
</html>
```
FILE: rulers.js
```js
const NS = 'http://www.w3.org/2000/svg';
const STEP = 33.87;

function add(parent, name, attrs, text) {
  const node = document.createElementNS(NS, name);
  for (const key in attrs) node.setAttribute(key, attrs[key]);
  if (text !== undefined) node.textContent = text;
  parent.appendChild(node);
}

function drawHorizontal() {
  const svg = document.getElementById('hruler');
  const zero = 113;
  const marks = [106, 209, 313, 417, 521, 625];
  add(svg, 'rect', { x: 0, y: 0, width: 711, height: 16, fill: '#c6c6c6' });
  for (let i = 0; i < 5; i++) {
    add(svg, 'rect', { x: marks[i] + 8, y: 0, width: 94, height: 16, fill: '#fff' });
  }
  for (let n = -3; n <= 17; n++) {
    const x = zero + n * STEP;
    if (n % 3 !== 0 || n === -3 || n === 15) {
      add(svg, 'text', { x: x, y: 12, class: 'num' }, Math.abs(n));
    }
    for (const part of [0.25, 0.5, 0.75]) {
      const tick = Math.round(x + part * STEP);
      if (marks.some(m => Math.abs(m - tick) < 6)) continue;
      const tall = part === 0.5;
      add(svg, 'rect', { x: tick, y: tall ? 5 : 8, width: 1, height: tall ? 6 : 2, fill: '#444' });
    }
  }
  for (const m of marks) {
    add(svg, 'rect', { x: m - 6, y: 0, width: 12, height: 16, fill: '#d0d0d0' });
    add(svg, 'path', {
      d: `M${m - 4} 3.500h9M${m - 4} 5.500h9M${m - 4} 7.500h9M${m - 4} 9.500h9M${m - 4} 11.500h9M${m - 3.5} 3v10M${m - 1.5} 3v10M${m + 0.5} 3v10M${m + 2.5} 3v10`,
      stroke: '#777', 'stroke-width': 1, fill: 'none'
    });
  }
}

function drawVertical() {
  const svg = document.getElementById('vruler');
  const zero = -99;
  add(svg, 'rect', { x: 0, y: 0, width: 17, height: 732, fill: '#fff' });
  add(svg, 'rect', { x: 0, y: 732, width: 17, height: 900, fill: '#c6c6c6' });
  for (let n = 3; n <= 26; n++) {
    const y = zero + n * 33.8;
    add(svg, 'text', { x: 0, y: 0, class: 'num', transform: `translate(13 ${Math.round(y)}) rotate(-90)` }, n);
    for (const part of [0.25, 0.5, 0.75]) {
      const tall = part === 0.5;
      add(svg, 'rect', { x: tall ? 7 : 9, y: Math.round(y + part * 33.8), width: tall ? 6 : 2, height: 1, fill: '#444' });
    }
  }
}

drawHorizontal();
drawVertical();
```
FILE: styles.css
```css
*, *::before, *::after { box-sizing: border-box; }
body {
  margin: 0;
  height: 100vh;
  overflow: hidden;
  position: relative;
  display: flex;
  flex-direction: column;
  background: #e6e6e6;
  color: #444;
  font: 12px/16px "Noto Sans", "Noto Sans CJK SC", sans-serif;
}
button, input, select { font: inherit; color: inherit; margin: 0; padding: 0; border: 0; background: none; border-radius: 0; outline: 0; }
button { display: flex; align-items: center; justify-content: center; white-space: nowrap; }
svg { display: block; flex: none; overflow: visible; }
.sprite { position: absolute; width: 0; height: 0; }
.caret { display: block; width: 0; height: 0; border: 3px solid transparent; border-top-color: #777; border-bottom: 0; }
.big-caret { border-width: 5px; border-bottom: 0; }
.pressed { background: #c5c5c5; }

/* title bar and tabs */
.titlebar { display: flex; height: 60px; background: #2b579a; border-top: 1px solid #6181b3; color: #fff; flex: none; }
.title-left { width: 782px; display: flex; flex-direction: column; }
.doc-title { height: 33px; line-height: 33px; font-size: 13px; text-align: center; color: #b5c7e3; }
.tabs, .context-tabs { display: flex; height: 26px; }
.tab { width: 53px; height: 26px; padding-bottom: 3px; }
.tab.file { width: 56px; margin-right: 4px; }
.tab.wide { width: 78px; }
.tab.wider { width: 86px; }
.context { width: 104px; background: #224478; }
.context-title { height: 33px; line-height: 33px; text-align: center; color: #b5c7e3; }
.context-tabs .tab { width: 52px; }
.context-tabs .active { background: #f0f0f0; color: #2b579a; }
.title-right { flex: 1; display: flex; flex-direction: column; }
.window-buttons { height: 33px; display: flex; justify-content: flex-end; padding-bottom: 4px; }
.window-buttons button { width: 46px; }
.window-buttons button:last-child { width: 44px; }
.tell-row { height: 26px; display: flex; align-items: center; }
.bulb { margin-left: 15px; }
.tell { flex: 1; margin-left: 4px; height: 24px; }
.tell::placeholder { color: #a8bde0; opacity: 1; }
.login { width: 44px; height: 26px; padding-bottom: 3px; }
.share { width: 67px; height: 26px; background: #17407a; gap: 3px; padding: 0 10px 4px 0; }

/* ribbon */
.ribbon { display: flex; flex: none; height: 95px; background: #f0f0f0; border-bottom: 1px solid #cfcfcf; }
.group { display: flex; flex-direction: column; padding-top: 3px; background: linear-gradient(#d2d2d2, #d2d2d2) right 4px / 1px 86px no-repeat; flex: none; }
.items { display: flex; height: 69px; padding-left: 4px; }
.g-table { width: 134px; }
.g-draw { width: 104px; }
.g-rows { width: 320px; }
.g-merge { width: 146px; }
.g-size { width: 278px; }
.g-align { width: 170px; }
.g-data { width: 223px; }
.g-rows .items, .g-size .items { padding-left: 0; }
.big { flex-direction: column; justify-content: flex-start; height: 69px; padding-top: 4px; line-height: 15px; flex: none; }
.big svg, .big .fx { margin-bottom: 3px; }
.big .caret { margin-top: 6px; }
.letter { font-family: "Open Sans", sans-serif; font-weight: 600; }
.w40 { width: 41px; } .w42 { width: 42px; } .w46 { width: 46px; } .w50 { width: 50px; }
.w54 { width: 52px; } .w60 { width: 60px; } .w65 { width: 65px; }
.sep { width: 1px; height: 60px; background: #dcdcdc; flex: none; }
.g-rows .sep { margin-right: 3px; }
.g-size .sep { margin: 0 2px; }
.foot { display: grid; grid-template-columns: 1fr; line-height: 24px; height: 22px; padding-right: 2px; color: #666; text-align: center; }
.foot.has-launch { grid-template-columns: 1fr 14px; }
.launch { align-self: center; height: 16px; padding-top: 8px; }
.fx { height: 30px; font: italic 32px/26px "Liberation Serif", serif; color: #555; }
.dims { display: flex; flex-direction: column; gap: 7px; padding: 8px 4px 0 3px; }
.dim { display: flex; align-items: center; height: 24px; gap: 3px; }
.dim label { width: 29px; white-space: nowrap; }
.spin { display: flex; align-items: center; width: 79px; height: 24px; background: #fff; border: 1px solid #ababab; padding: 0 4px 0 2px; }
.spin input { width: 100%; min-width: 0; height: 20px; }
.updown { width: 6px; height: 13px; flex: none; background: conic-gradient(from 135deg at 50% 0, #666 0 90deg, transparent 0) 0 0 / 6px 3px no-repeat, conic-gradient(from -45deg at 50% 100%, #666 0 90deg, transparent 0) 0 10px / 6px 3px no-repeat; }
.dist { display: flex; flex-direction: column; gap: 7px; padding: 8px 0 0 3px; }
.dist button { height: 24px; gap: 3px; }
.align-grid { display: grid; grid-template-columns: repeat(3, 22px); grid-template-rows: repeat(3, 23px); margin-right: 1px; }
.collapse { margin: auto 0 4px auto; width: 26px; height: 8px; }

/* quick access */
.quick { display: flex; align-items: center; flex: none; height: 35px; padding: 0 0 2px 14px; }
.quick button { width: 20px; height: 24px; margin-right: 33px; }
.quick .save { margin-right: 30px; }
.quick .save + button { margin-right: 0; }
.quick .more { width: 16px; margin-right: 18px; }

/* workspace */
.workspace { display: flex; flex: 1; min-height: 0; }
.nav { width: 269px; border-right: 1px solid #c0c0c0; padding: 12px 18px 0 13px; display: flex; flex-direction: column; flex: none; overflow: hidden; }
.nav-head { display: flex; align-items: center; height: 28px; }
.nav-head h2 { flex: 1; margin: 0; font-size: 21px; line-height: 28px; font-weight: 400; color: #2b579a; }
.nav-head button { width: 18px; height: 18px; margin-bottom: 6px; }
.nav-head button:last-child { margin-right: -10px; }
.search { display: flex; align-items: center; height: 24px; margin-top: 7px; background: #fff; border: 1px solid #ababab; padding: 0 4px 0 2px; gap: 6px; }
.search input { flex: 1; min-width: 0; height: 20px; }
.search input::placeholder { color: #666; opacity: 1; }
.nav-tabs { display: flex; gap: 24px; margin: 16px 0 11px 1px; height: 20px; }
.nav-tabs .on { color: #2b579a; font-weight: 700; }
.thumbs { display: flex; flex-direction: column; overflow: hidden; margin-left: 53px; padding: 0 2px; }
.thumb { display: flex; flex-direction: column; align-items: flex-start; width: 115px; flex: none; }
.sheet { display: block; width: 115px; height: 163px; background: #fff; border: 1px solid #ababab; }
.cut .sheet { height: 28px; border-top: 0; }
.no { width: 115px; height: 44px; padding-top: 5px; text-align: center; }
.current .sheet { box-shadow: 0 0 0 2px #2b579a; }
.current .no { color: #2b579a; }
.vruler-col { width: 29px; padding: 3px 0 0 3px; flex: none; display: flex; flex-direction: column; }
.corner { width: 24px; height: 24px; background: #fff; border: 2px solid #d6d6d6; flex: none; }
.vruler { width: 17px; margin: 3px 0 0 2px; flex: 1; min-height: 0; overflow: hidden; }
.num { font: 10px "Liberation Sans", sans-serif; fill: #333; text-anchor: middle; }
.canvas { flex: 1; min-width: 0; display: flex; flex-direction: column; align-items: center; padding: 5px 15px 0 0; }
.hruler { height: 16px; width: 711px; flex: none; overflow: hidden; }
.page { width: 711px; margin-top: 9px; flex: 1; min-height: 0; background: #fff; border: 1px solid #c8c8c8; border-width: 0 1px; display: flex; flex-direction: column; padding: 66px 85px 42px 85px; }
.doc-table { width: 521px; margin-left: 20px; border-collapse: collapse; flex: none; }
.doc-table td { width: 104px; height: 39px; border: 1px solid #000; padding: 0; }
.page-foot { margin-top: auto; display: flex; justify-content: space-between; font-size: 10px; line-height: 20px; }
.mark { width: 21px; height: 22px; border: 0 solid #999; border-top-width: 1px; }
.mark.left { border-right-width: 1px; }
.mark.right { border-left-width: 1px; }

/* status bar */
.status { display: flex; align-items: center; flex: none; height: 22px; padding-left: 6px; background: #f0f0f0; border-top: 1px solid #c6c6c6; white-space: nowrap; padding-bottom: 2px; }
.s1 { width: 61px; } .s2 { width: 42px; } .s3 { width: 109px; } .s4 { width: 75px; } .s5 { width: 75px; } .s6 { width: 74px; } .s7 { width: 42px; }
.views { display: flex; margin-left: auto; }
.views button { width: 38px; height: 21px; margin-bottom: -2px; }
.zoom { display: flex; align-items: center; width: 192px; padding-left: 4px; }
.zoom button { width: 8px; height: 16px; }
.zoom input { appearance: none; width: 102px; height: 16px; margin: 0 3px; background: linear-gradient(#aaa, #aaa) center / 100% 1px no-repeat; }
.zoom input::-webkit-slider-thumb { appearance: none; width: 4px; height: 11px; background: #555; }
.zoom span { margin-left: 14px; }

/* dialogs */
.dialog { position: absolute; display: flex; flex-direction: column; background: #f0f0f0; color: #000; border: 1px solid #777; }
.props { z-index: 1; left: 380px; top: 218px; width: 423px; height: 566px; box-shadow: 0 3px 12px rgba(0, 0, 0, .3); border-color: #999; }
.borders { z-index: 2; left: 99px; top: 260px; width: 545px; height: 523px; box-shadow: 0 4px 18px rgba(0, 0, 0, .5); border-color: #555; }
.dlg-title { display: flex; align-items: center; height: 30px; background: #fff; padding: 0 1px 0 8px; flex: none; }
.dlg-title span { flex: 1; }
.dlg-title button { width: 45px; height: 28px; font-size: 14px; }
.props .dlg-title { color: #888; }
.dlg-tabs { display: flex; align-items: flex-end; height: 37px; padding-left: 6px; flex: none; margin-bottom: -1px; z-index: 1; }
.dtab { height: 26px; background: #f0f0f0; border: 1px solid #dcdcdc; border-left: 0; }
.dtab.on { width: 60px; height: 28px; background: #fff; border: 1px solid #dcdcdc; border-bottom: 0; padding: 0 3px 0 0; }
.t-page { width: 79px; } .t-shade { width: 56px; }
.props .dlg-tabs { width: 321px; }
.grow { flex: 1; }
.alt { width: 79px; }
.panel { flex: 1; background: #fff; border: 1px solid #dcdcdc; margin: 0 8px 0 6px; padding: 0 6px 12px; display: flex; flex-direction: column; min-height: 0; }
.dlg-foot { display: flex; justify-content: flex-end; gap: 10px; padding: 12px 7px 10px; height: 51px; flex: none; }
.btn { width: 74px; height: 29px; background: #e1e1e1; border: 1px solid #adadad; flex: none; }
.btn:disabled { background: #ccc; border-color: #bfbfbf; color: #a0a0a0; text-shadow: 1px 1px #fff; }
.btn.focus { width: 110px; border: 2px solid #0078d7; }
.btn.hot { background: #e5f1fb; border-color: #0078d7; }
.legend { display: flex; align-items: center; gap: 5px; height: 18px; line-height: 18px; }
.legend::after { content: ""; flex: 1; height: 1px; background: #dcdcdc; }
.combo { position: relative; height: 28px; }
.combo select { appearance: none; width: 100%; height: 100%; background: #fff; border: 1px solid #999; padding: 0 22px 0 3px; }
.combo::before { content: ""; position: absolute; right: 0; top: 0; width: 18px; height: 100%; background: #e1e1e1; border: 1px solid #999; pointer-events: none; }
.combo::after { content: ""; position: absolute; right: 6px; top: 50%; width: 7px; height: 7px; margin-top: -5px; border: solid #444; border-width: 0 1px 1px 0; transform: rotate(45deg); pointer-events: none; }
.props .panel { padding-top: 11px; }
.prow { display: flex; justify-content: flex-end; align-items: center; gap: 10px; flex: none; }
.unit { margin: 9px 0; }
.unit .combo { width: 110px; }
.indent { width: 116px; margin: 9px 98px 0 auto; }
.indent label { display: block; margin: 0 0 3px 23px; line-height: 18px; }
.spinbox { display: flex; height: 26px; border: 1px solid #999; padding: 1px; }
.spinbox input { flex: 1; min-width: 0; }
.steps { display: flex; flex-direction: column; width: 15px; }
.steps button { flex: 1; border: 1px solid #999; background: #eee; }
.steps .caret { border-top-color: #000; }
.up { width: 0; height: 0; border: 3px solid transparent; border-bottom-color: #000; border-top: 0; }
.wrap { margin-top: 53px; }
.place { margin-top: 83px; padding-right: 1px; }
.pair { margin-top: auto; padding-right: 1px; }

/* borders dialog columns */
.cols { flex-direction: row; padding: 12px 6px 9px 8px; }
.col { display: flex; flex-direction: column; }
.cap, .style label, .preview label { height: 18px; line-height: 18px; white-space: nowrap; }
.settings { width: 108px; border-right: 1px solid #999; }
.settings .cap { margin-bottom: 3px; }
.set { justify-content: flex-start; gap: 9px; height: 51px; margin-bottom: 11px; flex: none; }
.set svg { border: 1px solid #888; width: 36px; height: 51px; background: #fff; }
.style { width: 167px; padding: 0 9px 0 10px; border-right: 1px solid #999; }
.style .cap { margin-bottom: 3px; }
.listbox { display: flex; justify-content: space-between; height: 174px; border: 1px solid #828790; padding: 2px; margin-bottom: 9px; }
.lines { width: 124px; }
.ln { width: 124px; height: 34px; padding-left: 4px; }
.ln.sel { height: 32px; border: 1px solid #0063b1; }
.scroll { width: 16px; display: flex; flex-direction: column; align-items: center; background: #f0f0f0; padding: 5px 0; }
.grip { width: 14px; height: 28px; background: #cdcdcd; margin: 5px 0 auto; }
.color { height: 26px; margin: 3px 0 4px; }
.combo.color select { padding-left: 52px; }
.width { height: 40px; margin-top: 3px; }
.combo.width select { padding: 0 22px 6px 8px; background: linear-gradient(#000, #000) 58px 18px / 64px 1px no-repeat, #fff; }
.preview { flex: 1; padding-left: 10px; }
.preview p { margin: 8px 0 0; padding-left: 8px; text-align: center; line-height: 18px; }
.stage { display: flex; gap: 33px; margin: 27px 0 0 10px; }
.side { display: flex; flex-direction: column; gap: 6px; padding-top: 31px; }
.side button, .bottom button { width: 21px; height: 20px; background: #e1e1e1; border: 1px solid #adadad; }
.bottom { display: flex; justify-content: space-between; margin: 29px 1px 22px 10px; }
.mid { display: flex; gap: 11px; }
.preview .combo { margin-top: 3px; }
.opt { margin: 6px 1px 0 auto; }

/* annotations and badge */
.arrows { position: absolute; z-index: 3; left: 0; top: 0; pointer-events: none; filter: drop-shadow(2px 2px 1px rgba(0, 0, 0, .4)); }
.brand { position: absolute; right: 6px; bottom: 8px; width: 190px; height: 52px; pointer-events: none; display: grid; grid-template-rows: 28px 18px; padding: 6px 0 0 80px; white-space: nowrap; }
.brand svg { position: absolute; left: 0; top: 0; }
.brand strong { font: 700 21px/28px "Noto Sans CJK SC", sans-serif; color: #68a0d6; }
.brand span { font: 17px/18px "Liberation Sans", sans-serif; color: #6fc07a; }
```
